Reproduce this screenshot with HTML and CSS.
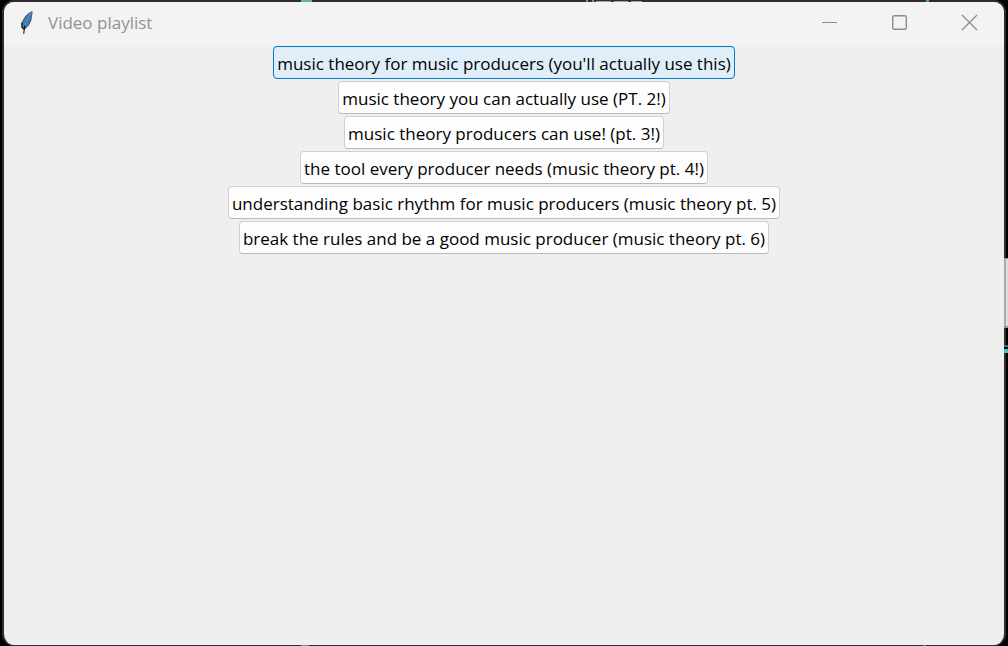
FILE: index.html
```html
<!DOCTYPE html>
<html lang="en">
<head>
<meta charset="utf-8">
<meta name="viewport" content="width=device-width, initial-scale=1">
<title>Video playlist</title>
<link rel="stylesheet" href="styles.css">
</head>
<body class="desktop">
<main class="window">
  <header class="titlebar">
    <svg class="app-icon" viewBox="0 0 16 26" aria-hidden="true">
      <path d="M13 1.5 C8 3 4 8 2 14 L3 19 L5 20 C9 17 12 12 12 8 Z" fill="#3e76b4" stroke="#4a4a4a" stroke-width=".9"/>
      <path d="M12 3 C8 8 6 13 4 19" fill="none" stroke="#6c9ccb" stroke-width="1"/>
      <path d="M5 16 L4 25 M2 13 V18 L4 20" fill="none" stroke="#111" stroke-width="1.2"/>
    </svg>
    <h1 class="title">Video playlist</h1>
    <div class="controls">
      <button class="control" type="button" aria-label="Minimize"><svg class="glyph" viewBox="0 0 16 16"><path d="M0 7.5H15"/></svg></button>
      <button class="control" type="button" aria-label="Maximize"><svg class="glyph" viewBox="0 0 16 16"><rect x=".7" y=".7" width="13.6" height="13.6" rx="1.5" stroke-width="1.4"/></svg></button>
      <button class="control" type="button" aria-label="Close"><svg class="glyph" viewBox="0 0 16 16"><path d="M0 0L15 15M15 0L0 15" stroke-width="1.3"/></svg></button>
    </div>
  </header>
  <section class="playlist" aria-label="Videos">
    <button class="video video-active" type="button">music theory for music producers (you'll actually use this)</button>
    <button class="video" type="button">music theory you can actually use (PT. 2!)</button>
    <button class="video" type="button">music theory producers can use! (pt. 3!)</button>
    <button class="video" type="button">the tool every producer needs (music theory pt. 4!)</button>
    <button class="video" type="button">understanding basic rhythm for music producers (music theory pt. 5)</button>
    <button class="video" type="button">break the rules and be a good music producer (music theory pt. 6)</button>
  </section>
</main>
<div class="behind-top" aria-hidden="true"></div>
<div class="behind-bottom" aria-hidden="true"></div>
<div class="behind-scroll" aria-hidden="true"></div>
<div class="behind-line" aria-hidden="true"></div>
</body>
</html>
```
FILE: styles.css
```css
* { box-sizing: border-box; }
.desktop {
  margin: 0;
  height: 100vh;
  padding: 0 2px;
  display: flex;
  overflow: hidden;
  background: #000;
  font-family: "Open Sans", "Noto Sans", sans-serif;
}
.window {
  flex: 1;
  display: flex;
  flex-direction: column;
  overflow: hidden;
  border: 2px solid #2e2c2c;
  border-bottom-width: 1px;
  border-radius: 12px;
  background: #efefef;
}
.titlebar {
  height: 43px;
  display: flex;
  align-items: center;
  padding: 0 0 2px 16px;
  background: #f3f3f3;
}
.app-icon { width: 15px; height: 25px; }
.title {
  margin: 0 0 0 13px;
  font-size: 17px;
  line-height: 24px;
  font-weight: 400;
  color: #929292;
}
.controls { display: flex; margin-left: auto; }
.control {
  width: 70px;
  height: 41px;
  padding: 0 0 0 1px;
  display: flex;
  align-items: center;
  justify-content: center;
  border: 0;
  background: transparent;
}
.glyph { width: 16px; height: 16px; fill: none; stroke: #8c8c8c; stroke-width: 1; overflow: visible; }
.playlist {
  display: flex;
  flex-direction: column;
  align-items: center;
  gap: 2px;
  padding-top: 1px;
}
.video {
  height: 33px;
  padding: 2px 3px 0;
  border: 1px solid #d0d0d0;
  border-bottom-color: #b8b8b8;
  border-radius: 4px;
  background: #fdfdfd;
  color: #000;
  font-family: inherit;
  font-size: 17px;
  line-height: 24px;
  white-space: nowrap;
}
.video-active { border-color: #0078c8; background: #e0eef9; }
.behind-top, .behind-bottom, .behind-scroll, .behind-line { position: absolute; }
.behind-top {
  top: 0;
  left: 301px;
  width: 628px;
  height: 2px;
  background:
    linear-gradient(#5eb5aa, #5eb5aa) 0 0 / 11px 2px no-repeat,
    linear-gradient(#4aa99d, #4aa99d) 625px 0 / 3px 2px no-repeat,
    linear-gradient(#8a8787, #8a8787) 285px 0 / 2px 2px no-repeat,
    linear-gradient(#8a8787, #8a8787) 291px 0 / 2px 2px no-repeat,
    linear-gradient(#a7a4a4, #a7a4a4) 295px 1px / 15px 1px no-repeat,
    linear-gradient(#a7a4a4, #a7a4a4) 313px 1px / 14px 1px no-repeat,
    linear-gradient(#a7a4a4, #a7a4a4) 330px 1px / 11px 1px no-repeat;
}
.behind-bottom {
  bottom: 0;
  left: 301px;
  width: 625px;
  height: 1px;
  background:
    linear-gradient(#5c978f, #5c978f) 0 0 / 8px 1px no-repeat,
    linear-gradient(#4b837d, #4b837d) 622px 0 / 3px 1px no-repeat;
}
.behind-scroll {
  top: 258px;
  right: 0;
  width: 4px;
  height: 70px;
  border: solid #929292;
  border-width: 1px 0 2px;
  background: linear-gradient(90deg, #aaa 2px, #dedede 2px);
}
.behind-line {
  top: 345px;
  right: 0;
  width: 4px;
  height: 8px;
  background: linear-gradient(#267a76 2px, #000 2px 4px, #44c8be 4px);
}
```
